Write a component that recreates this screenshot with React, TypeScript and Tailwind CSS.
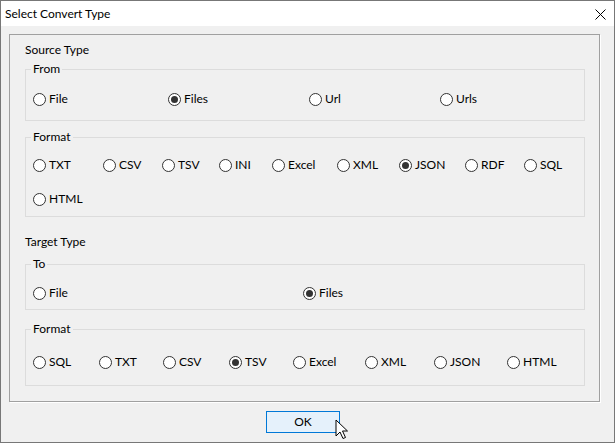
import React from "react";

type Item = { label: string; w: string; checked?: boolean };

function Radio({ label, w, checked }: Item) {
  return (
    <div className={`flex items-center shrink-0 ${w}`}>
      <span className="w-[13px] h-[13px] rounded-full border border-[#333333] bg-white flex items-center justify-center">
        {checked && <span className="w-[7px] h-[7px] rounded-full bg-[#333333]" />}
      </span>
      <span className="ml-[3px] leading-[16px]">{label}</span>
    </div>
  );
}

function Row({ items, className }: { items: Item[]; className: string }) {
  return (
    <div className={`flex items-center h-[16px] ${className}`}>
      {items.map((it) => (
        <Radio key={it.label} {...it} />
      ))}
    </div>
  );
}

function Group({ title, className, children }: { title: string; className: string; children: React.ReactNode }) {
  return (
    <div className={`border border-[#dcdcdc] pl-[7px] ${className}`}>
      <div className="-mt-[9px] ml-[-2px] w-fit px-[2px] bg-[#f0f0f0] leading-[16px]">{title}</div>
      {children}
    </div>
  );
}

export default function App() {
  const from: Item[] = [
    { label: "File", w: "w-[135px]" },
    { label: "Files", w: "w-[141px]", checked: true },
    { label: "Url", w: "w-[131px]" },
    { label: "Urls", w: "w-auto" },
  ];
  const fmt1: Item[] = [
    { label: "TXT", w: "w-[70px]" },
    { label: "CSV", w: "w-[59px]" },
    { label: "TSV", w: "w-[57px]" },
    { label: "INI", w: "w-[53px]" },
    { label: "Excel", w: "w-[65px]" },
    { label: "XML", w: "w-[62px]" },
    { label: "JSON", w: "w-[66px]", checked: true },
    { label: "RDF", w: "w-[59px]" },
    { label: "SQL", w: "w-auto" },
  ];
  const to: Item[] = [
    { label: "File", w: "w-[270px]" },
    { label: "Files", w: "w-auto", checked: true },
  ];
  const fmt2: Item[] = [
    { label: "SQL", w: "w-[66px]" },
    { label: "TXT", w: "w-[64px]" },
    { label: "CSV", w: "w-[66px]" },
    { label: "TSV", w: "w-[64px]", checked: true },
    { label: "Excel", w: "w-[72px]" },
    { label: "XML", w: "w-[69px]" },
    { label: "JSON", w: "w-[73px]" },
    { label: "HTML", w: "w-auto" },
  ];

  return (
    <div className="w-[615px] h-[443px] border border-[#777777] bg-[#f0f0f0] flex flex-col text-[12px] text-black font-['Lato',sans-serif] overflow-hidden">
      <div className="h-[25px] bg-white flex items-center justify-between pl-[4px] pr-[8px] shrink-0">
        <span className="leading-[16px]">Select Convert Type</span>
        <svg width="11" height="11" viewBox="0 0 11 11" className="mt-[1px]">
          <path d="M0.5 0.5 L10.5 10.5 M10.5 0.5 L0.5 10.5" stroke="#000" strokeWidth="1" fill="none" />
        </svg>
      </div>
      <div className="relative flex-1 pl-[8px] pt-[8px]">
        <div className="w-[591px] h-[368px] border border-[#a0a0a0] shadow-[1px_1px_0_#ffffff] pl-[15px] pr-[14px] pt-[7px]">
          <div className="leading-[16px]">Source Type</div>
          <Group title="From" className="mt-[11px] pb-[13px]">
            <Row items={from} className="mt-[14px]" />
          </Group>
          <Group title="Format" className="mt-[16px] pb-[9px]">
            <Row items={fmt1} className="mt-[12px]" />
            <Row items={[{ label: "HTML", w: "w-auto" }]} className="mt-[18px]" />
          </Group>
          <div className="leading-[16px] mt-[17px]">Target Type</div>
          <Group title="To" className="mt-[14px] pb-[8px]">
            <Row items={to} className="mt-[13px]" />
          </Group>
          <Group title="Format" className="mt-[19px] pb-[15px]">
            <Row items={fmt2} className="mt-[17px]" />
          </Group>
        </div>
        <div className="pl-[257px] mt-[9px]">
          <button className="w-[74px] h-[22px] border border-[#0078d7] bg-[#e5f1fb] flex items-center justify-center leading-[16px]">
            OK
          </button>
        </div>
        <svg
          width="14"
          height="21"
          viewBox="0 0 14 21"
          className="absolute left-[334px] top-[393px]"
        >
          <path
            d="M1 1 L1 17 L5 13 L8 19.5 L10.5 18.5 L7.5 12 L12.5 12 Z"
            fill="#ffffff"
            stroke="#000000"
            strokeWidth="1"
            strokeLinejoin="miter"
          />
        </svg>
      </div>
    </div>
  );
}
